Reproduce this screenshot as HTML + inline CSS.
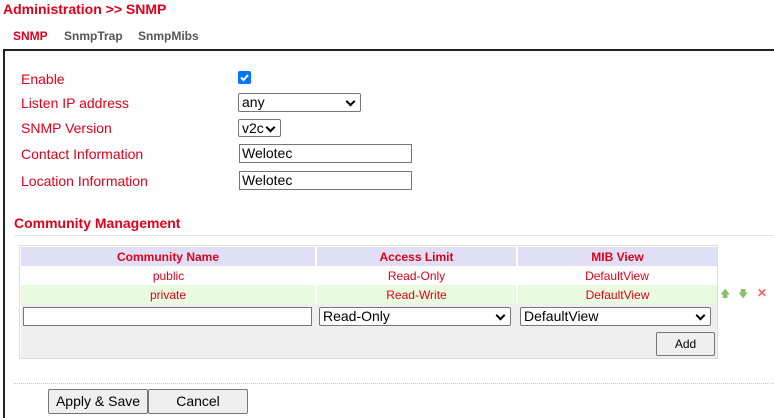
<!DOCTYPE html>
<html><head><style>
html,body{margin:0;width:774px;height:418px;overflow:hidden}
body{background:#fff;font-family:"Liberation Sans",Arial,sans-serif;position:relative;color:#e0001b}
.a{position:absolute;white-space:nowrap}
.lbl{font-size:14px;color:#e0001b;left:21px}
.sel{position:absolute;border:1px solid #767676;border-radius:2px;background:#fff;font-size:14px;color:#000;box-sizing:border-box;padding-left:3px;line-height:16px}
.sel:after{content:"";position:absolute;right:6px;top:4px;width:5px;height:5px;border-right:2px solid #000;border-bottom:2px solid #000;transform:rotate(45deg)}
.inp{position:absolute;border:1px solid #767676;box-sizing:border-box;font-size:14px;color:#000;padding-left:2px;line-height:16px;background:#fff}
td{font-size:12px;text-align:center;padding:0;color:#e0001b}
.btn{position:absolute;border:1px solid #767676;background:#efefef;border-radius:2px;box-sizing:border-box;font-size:14px;color:#000;text-align:center}
</style></head><body>
<div class="a" style="left:3px;top:1px;font-size:14px;font-weight:bold">Administration &gt;&gt; SNMP</div>
<div class="a" style="left:13px;top:29px;font-size:12px;font-weight:bold">SNMP</div>
<div class="a" style="left:64px;top:29px;font-size:12px;font-weight:bold;color:#555">SnmpTrap</div>
<div class="a" style="left:138px;top:29px;font-size:12px;font-weight:bold;color:#555">SnmpMibs</div>
<div class="a" style="left:3px;top:49px;width:771px;height:369px;border-top:2px solid #222;border-left:2px solid #222;box-sizing:border-box"></div>
<div class="a lbl" style="top:71px">Enable</div>
<div class="a lbl" style="top:95px">Listen IP address</div>
<div class="a lbl" style="top:120px">SNMP Version</div>
<div class="a lbl" style="top:146px">Contact Information</div>
<div class="a lbl" style="top:173px">Location Information</div>
<div class="a" style="left:238px;top:71px;width:13px;height:13px;background:#0075ff;border-radius:2px"><svg width="13" height="13"><path d="M3 6.5l2.5 2.5 4.5-5" stroke="#fff" stroke-width="2" fill="none"/></svg></div>
<div class="sel" style="left:238px;top:93px;width:123px;height:19px">any</div>
<div class="sel" style="left:238px;top:119px;width:43px;height:18px">v2c</div>
<div class="inp" style="left:239px;top:144px;width:173px;height:19px">Welotec</div>
<div class="inp" style="left:239px;top:171px;width:173px;height:19px">Welotec</div>
<div class="a" style="left:14px;top:215px;font-size:14px;font-weight:bold">Community Management</div>
<div class="a" style="left:14px;top:235px;width:760px;height:1px;background:#e6e6e6"></div>
<div class="a" style="left:19px;top:245px;width:699px;height:114px;border:1px solid #ddd;box-sizing:border-box"></div>
<table class="a" style="left:21px;top:247px;border-collapse:collapse;width:696px">
<tr style="background:#e1dff5;height:19px;font-weight:bold"><td style="width:294px;border-right:2px solid #fff;font-weight:bold">Community Name</td><td style="width:199px;border-right:2px solid #fff;font-weight:bold">Access Limit</td><td style="font-weight:bold">MIB View</td></tr>
<tr style="height:19px"><td>public</td><td>Read-Only</td><td>DefaultView</td></tr>
<tr style="height:19px;background:#e8fbdf"><td style="border-right:2px solid #fff">private</td><td style="border-right:2px solid #fff">Read-Write</td><td>DefaultView</td></tr>
<tr style="height:24px;background:#efefef"><td></td><td></td><td></td></tr>
<tr style="height:30px;background:#efefef"><td></td><td></td><td></td></tr>
</table>
<div class="inp" style="left:23px;top:307px;width:289px;height:19px"></div>
<div class="sel" style="left:319px;top:307px;width:192px;height:19px">Read-Only</div>
<div class="sel" style="left:520px;top:307px;width:191px;height:19px">DefaultView</div>
<div class="btn" style="left:656px;top:332px;width:59px;height:24px;line-height:22px;font-size:12px">Add</div>
<div class="a" style="left:720px;top:287px;font-size:10px;color:#8bbf6b">🡅</div>
<div class="a" style="left:738px;top:287px;font-size:10px;color:#8bbf6b">🡇</div>
<div class="a" style="left:757px;top:286px;font-size:12px;color:#e66;font-weight:bold">✕</div>
<div class="a" style="left:14px;top:383px;width:760px;border-top:1px dotted #ccc"></div>
<div class="btn" style="left:48px;top:389px;width:100px;height:25px;line-height:23px">Apply &amp; Save</div>
<div class="btn" style="left:148px;top:389px;width:100px;height:25px;line-height:23px">Cancel</div>
</body></html>
